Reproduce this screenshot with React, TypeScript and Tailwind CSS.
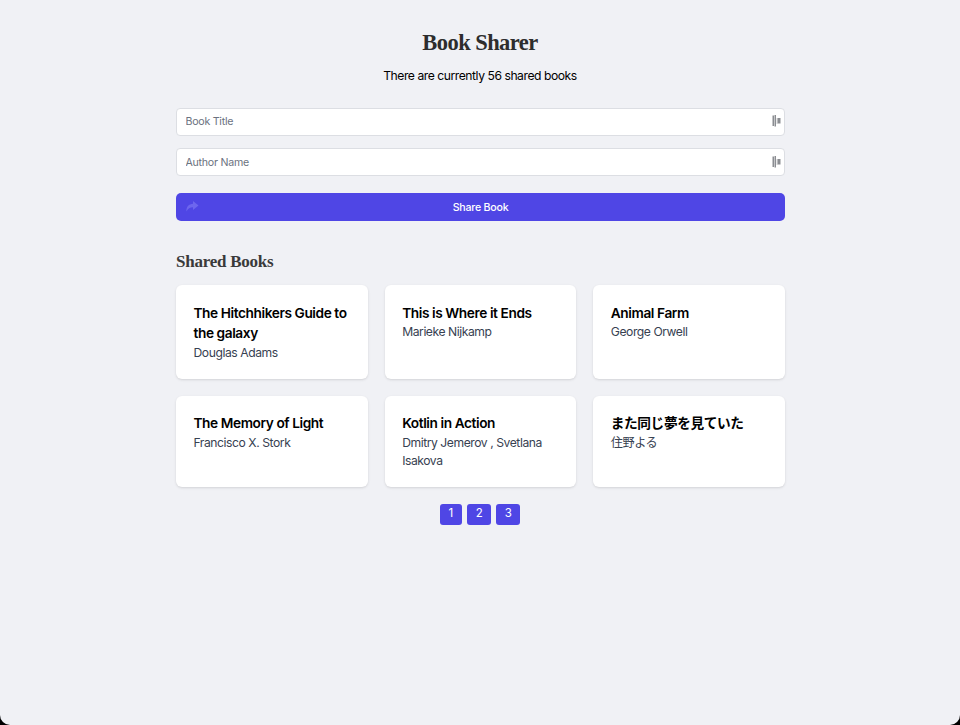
const books = [
  { title: "The Hitchhikers Guide to the galaxy", author: "Douglas Adams" },
  { title: "This is Where it Ends", author: "Marieke Nijkamp" },
  { title: "Animal Farm", author: "George Orwell" },
  { title: "The Memory of Light", author: "Francisco X. Stork" },
  { title: "Kotlin in Action", author: "Dmitry Jemerov , Svetlana Isakova" },
  { title: "また同じ夢を見ていた", author: "住野よる" },
];

function FieldIcon() {
  return (
    <svg className="absolute right-[3px] top-[8px] w-[10px] h-[12px] text-[#8b8d92]" viewBox="0 0 10 12" fill="currentColor" aria-hidden="true">
      <rect x="0.5" y="0.5" width="1.5" height="10.5" />
      <rect x="2.5" y="0" width="1.5" height="11.5" />
      <rect x="4.5" y="3" width="1" height="6" opacity="0.4" />
      <rect x="5.5" y="3" width="3" height="5.5" />
    </svg>
  );
}

function TextField({ placeholder }: { placeholder: string }) {
  return (
    <div className="relative">
      <input
        type="text"
        placeholder={placeholder}
        className="w-full h-[28px] px-[8.5px] bg-white border border-[#dcdee3] rounded-[4px] text-[10.64px] tracking-[-0.25px] text-gray-700 placeholder-[#6b7280] focus:outline-none"
      />
      <FieldIcon />
    </div>
  );
}

export default function App() {
  return (
    <div className="bg-black min-h-[725px] font-['Inter',sans-serif]">
      <div className="min-h-[725px] bg-[#f0f1f5] rounded-b-[10px] flex flex-col items-center">
        <div className="w-[608px] pt-[29px]">
          <h1 className="text-center text-[22.5px] leading-[28px] tracking-[-0.55px] font-bold text-[#2d2d2d] font-['Liberation_Serif',serif]">
            Book Sharer
          </h1>
          <p className="mt-[9px] text-center text-[12.16px] leading-[20px] tracking-[-0.46px] text-black">
            There are currently 56 shared books
          </p>

          <form className="mt-[21px] w-[609px]">
            <div className="flex flex-col gap-[12px]">
              <TextField placeholder="Book Title" />
              <TextField placeholder="Author Name" />
            </div>
            <button
              type="button"
              className="relative mt-[17px] w-full h-[28px] pt-[1px] rounded-[5px] bg-[#4f46e5] text-white text-[10.64px] tracking-[-0.23px] font-medium"
            >
              <svg className="absolute left-[9px] top-[7px] w-[14px] h-[13px] text-[#6d66ee]" viewBox="0 0 14 13" fill="currentColor" aria-hidden="true">
                <path d="M8 1 13.5 5.5 8 10V7.3C5 7.3 3 8.3 1.5 11.5 1 7 3.8 4 8 3.8Z" />
              </svg>
              Share Book
            </button>
          </form>

          <h2 className="mt-[30px] text-[17px] leading-[22px] tracking-[-0.25px] font-bold text-[#3a3a3a] font-['Liberation_Serif',serif]">
            Shared Books
          </h2>

          <div className="mt-[12px] w-[609px] grid grid-cols-3 gap-[17px]">
            {books.map((book) => (
              <div key={book.title} className="bg-white rounded-[6px] shadow-sm px-[17.5px] pt-[17.5px] pb-[17px]">
                <h3 className="text-[13.68px] leading-[20.5px] tracking-[-0.41px] font-semibold text-black font-['Inter','Noto_Sans_CJK_JP',sans-serif]">
                  {book.title}
                </h3>
                <p className="text-[12.16px] leading-[18px] tracking-[-0.45px] text-[#374151] font-['Inter','Noto_Sans_CJK_JP',sans-serif]">
                  {book.author}
                </p>
              </div>
            ))}
          </div>

          <div className="mt-[17px] flex justify-center gap-[5.5px]">
            {["1", "2", "3"].map((n) => (
              <button key={n} type="button" className="h-[21px] min-w-[22px] px-[8.25px] rounded-[3px] bg-[#4f46e5] text-white text-[11.5px]">
                {n}
              </button>
            ))}
          </div>
        </div>
      </div>
    </div>
  );
}
